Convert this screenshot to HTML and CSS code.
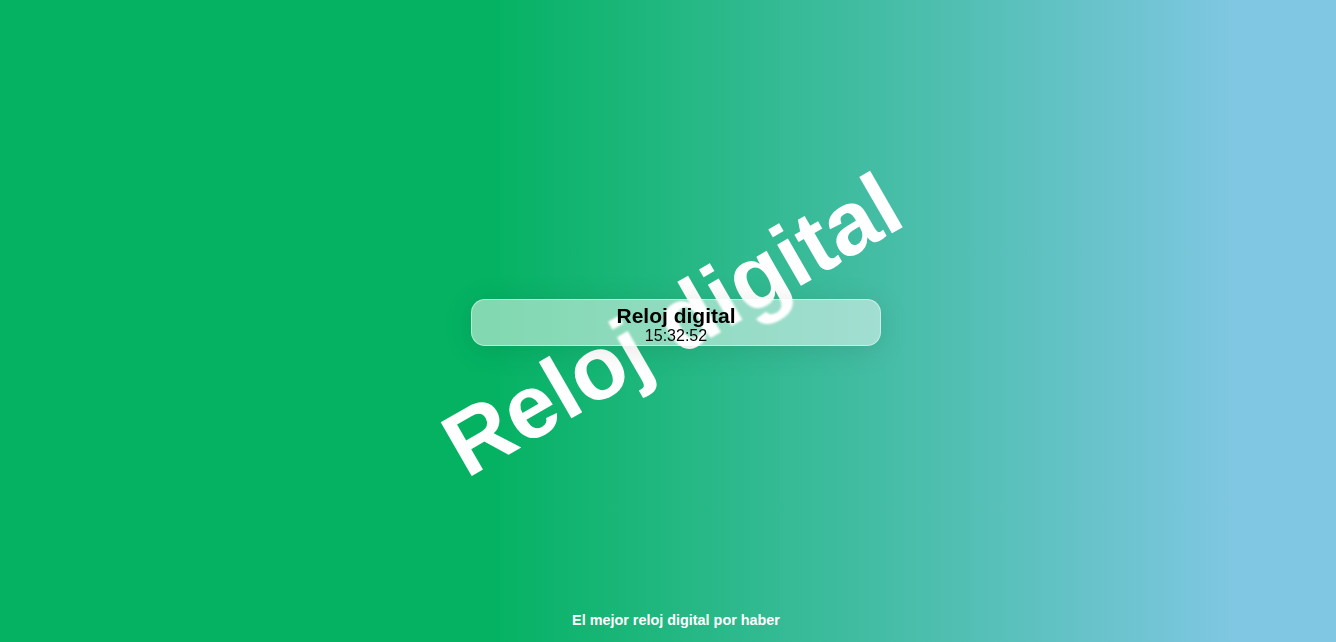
FILE: index.html
```html
<!DOCTYPE html>
<html lang="es">
<head>
<meta charset="utf-8">
<title>Reloj digital</title>
<link rel="stylesheet" href="styles.css">
</head>
<body>
<div class="watermark" aria-hidden="true">Reloj digital</div>
<div class="page">
  <div class="spacer"></div>
  <main class="card">
    <h1 class="card-title">Reloj digital</h1>
    <div class="card-time">15:32:52</div>
  </main>
  <footer class="footer">El mejor reloj digital por haber</footer>
</div>
</body>
</html>
```

FILE: styles.css
```css
html, body {
  margin: 0;
  padding: 0;
  height: 100%;
}

body {
  background: linear-gradient(to right, #04b262 0%, #04b262 36.7%, #7fc7e2 92.3%, #7fc7e2 100%);
  font-family: "Liberation Sans", Arial, sans-serif;
  overflow: hidden;
  position: relative;
}

.watermark {
  position: absolute;
  left: 50%;
  top: 50%;
  transform: translate(-50%, -50%) rotate(-30deg);
  margin-top: 4px;
  margin-left: 4px;
  font-family: "Liberation Sans", Arial, sans-serif;
  font-size: 90px;
  font-weight: 700;
  color: #ffffff;
  white-space: nowrap;
  line-height: normal;
  z-index: 0;
}

.page {
  position: relative;
  z-index: 1;
  height: 100vh;
  display: grid;
  grid-template-rows: 1fr auto 1fr;
  justify-items: center;
  padding-left: 16px;
  box-sizing: border-box;
}

.card {
  width: 410px;
  box-sizing: border-box;
  margin-top: 3px;
  display: flex;
  flex-direction: column;
  align-items: center;
  padding: 3px 0 1px;
  background: rgba(255, 255, 255, 0.5);
  border: 1px solid rgba(255, 255, 255, 0.45);
  border-radius: 14px;
  box-shadow: 0 4px 30px rgba(0, 0, 0, 0.1);
  backdrop-filter: blur(1px);
}

.card-title {
  margin: 0;
  font-size: 21px;
  font-weight: 700;
  line-height: 25px;
  color: #000;
}

.card-time {
  font-size: 16px;
  line-height: 16px;
  color: #000;
}

.footer {
  align-self: end;
  padding-bottom: 13px;
  font-size: 14.4px;
  font-weight: 700;
  line-height: 17px;
  color: #ffffff;
}
```
